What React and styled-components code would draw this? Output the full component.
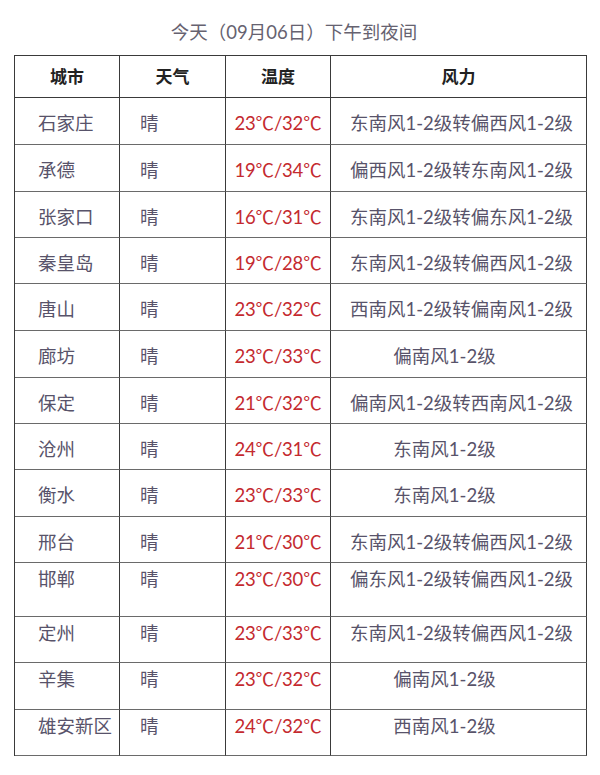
import styled, { createGlobalStyle } from 'styled-components';

const GlobalStyle = createGlobalStyle`
  html, body {
    margin: 0;
    padding: 0;
    background: #ffffff;
  }
  body {
    font-family: "Lato", "Noto Sans CJK SC", sans-serif;
  }
`;

const Page = styled.div`
  width: 600px;
  height: 775px;
  background: #ffffff;
  overflow: hidden;
`;

const Title = styled.div`
  height: 55px;
  box-sizing: border-box;
  padding: 20px 12px 0 0;
  line-height: 24px;
  font-size: 18.5px;
  color: #666270;
  text-align: center;
`;

const Grid = styled.div`
  margin-left: 14px;
  width: 573px;
  display: grid;
  grid-template-columns: 105px 106px 105px 256px;
  grid-template-rows: ${({ rows }) => rows.map((h) => `${h}px`).join(' ')};
  border-top: 1px solid #3a3a3a;
  border-left: 1px solid #3a3a3a;
  box-sizing: border-box;
`;

const Cell = styled.div`
  box-sizing: border-box;
  border-right: 1px solid #3a3a3a;
  border-bottom: 1px solid ${({ $head }) => ($head ? '#3a3a3a' : '#6a6a6a')};
  display: flex;
  align-items: ${({ $top }) => ($top ? 'flex-start' : 'center')};
  padding-top: ${({ $top, $head }) => ($top ? '4px' : $head ? '0' : '4px')};
  justify-content: ${({ $align }) => $align || 'center'};
  padding-left: ${({ $pl }) => $pl || 0}px;
  padding-right: ${({ $pr }) => $pr || 0}px;
  font-size: 18.5px;
  line-height: 24px;
  white-space: nowrap;
  color: #58536a;
`;

const HeadCell = styled(Cell)`
  font-size: 17px;
  font-weight: 700;
  color: #222222;
`;

const Temp = styled(Cell)`
  color: #c42a2f;
  letter-spacing: -0.2px;
`;

const rows = [
  ['石家庄', '23℃/32℃', '东南风1-2级转偏西风1-2级'],
  ['承德', '19℃/34℃', '偏西风1-2级转东南风1-2级'],
  ['张家口', '16℃/31℃', '东南风1-2级转偏东风1-2级'],
  ['秦皇岛', '19℃/28℃', '东南风1-2级转偏西风1-2级'],
  ['唐山', '23℃/32℃', '西南风1-2级转偏南风1-2级'],
  ['廊坊', '23℃/33℃', '偏南风1-2级'],
  ['保定', '21℃/32℃', '偏南风1-2级转西南风1-2级'],
  ['沧州', '24℃/31℃', '东南风1-2级'],
  ['衡水', '23℃/33℃', '东南风1-2级'],
  ['邢台', '21℃/30℃', '东南风1-2级转偏西风1-2级'],
  ['邯郸', '23℃/30℃', '偏东风1-2级转偏西风1-2级'],
  ['定州', '23℃/33℃', '东南风1-2级转偏西风1-2级'],
  ['辛集', '23℃/32℃', '偏南风1-2级'],
  ['雄安新区', '24℃/32℃', '西南风1-2级'],
];

const heights = [42, 47, 47, 46, 46, 47, 47, 46, 46, 47, 46, 54, 46, 47, 46];

export default function App() {
  return (
    <Page>
      <GlobalStyle />
      <Title>今天（09月06日）下午到夜间</Title>
      <Grid rows={heights}>
        <HeadCell $head>城市</HeadCell>
        <HeadCell $head>天气</HeadCell>
        <HeadCell $head>温度</HeadCell>
        <HeadCell $head>风力</HeadCell>
        {rows.map(([city, temp, wind], i) => {
          const top = i >= 10;
          const short = wind.length < 8;
          return [
            <Cell key={`c${i}`} $align="flex-start" $pl={23} $top={top}>
              {city}
            </Cell>,
            <Cell key={`w${i}`} $align="flex-start" $pl={20} $top={top}>
              晴
            </Cell>,
            <Temp key={`t${i}`} $top={top}>
              {temp}
            </Temp>,
            <Cell key={`f${i}`} $pr={short ? 28 : 0} $pl={short ? 0 : 6} $top={top}>
              {wind}
            </Cell>,
          ];
        })}
      </Grid>
    </Page>
  );
}
